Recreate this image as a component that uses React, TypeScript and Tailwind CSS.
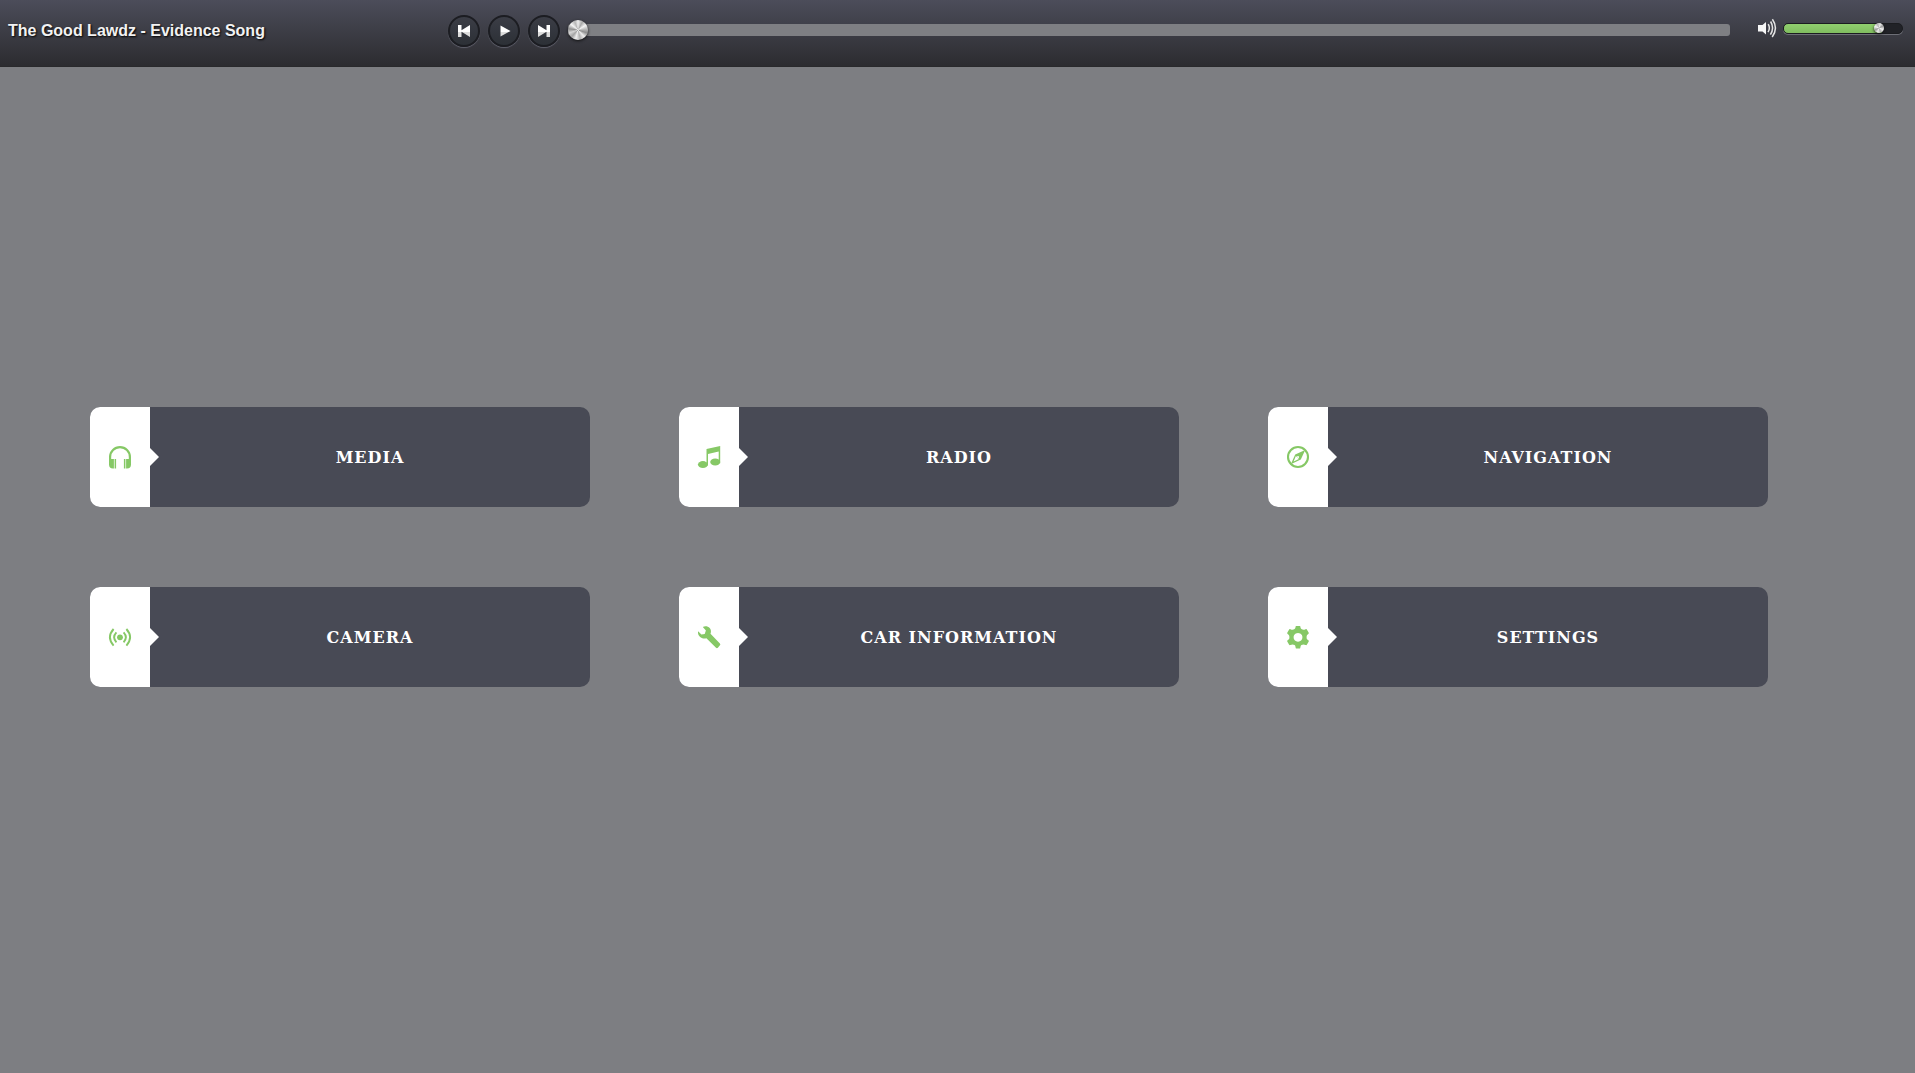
import { useState } from "react";
import type { ReactNode } from "react";

const icons: Record<string, ReactNode> = {
  headphones: (
    <>
      <path d="M2.100 17v-5a9.900 9.900 0 0 1 19.800 0v5" fill="none" stroke="currentColor" strokeWidth="2.200" />
      <path d="M1 14h4.900v9.400H5A4 4 0 0 1 1 19.400zM6.600 14h1.500v9.400H6.600zM23 14h-4.900v9.400h.9a4 4 0 0 0 4-4zM17.400 14h-1.500v9.400h1.500z" />
    </>
  ),
  music: (
    <>
      <path d="M9.500 4.100 23.200 1v17.200h-1.500V6.600L11 9v11.500H9.500z" />
      <ellipse cx="5.900" cy="19.600" rx="5" ry="3.500" />
      <ellipse cx="18.200" cy="17" rx="5" ry="3.500" />
    </>
  ),
  compass: (
    <>
      <circle cx="12" cy="12" r="10" fill="none" stroke="currentColor" strokeWidth="2.100" />
      <path
        fillRule="evenodd"
        d="M19.200 5 14.800 14.400 4.800 19.200 9.200 9.600zM9.900 11.100 7.600 16.400 12.900 14.100zM12 10.900a1.100 1.100 0 1 0 .01 0z"
      />
    </>
  ),
  broadcast: (
    <>
      <circle cx="12" cy="12.300" r="2.900" />
      <path
        d="M8.400 7.300Q3.800 12.300 8.400 17.300M15.600 7.300Q20.200 12.300 15.600 17.300M5.600 4Q-1.800 12.300 5.600 20.600M18.400 4Q25.800 12.300 18.400 20.600"
        fill="none"
        stroke="currentColor"
        strokeWidth="1.900"
      />
    </>
  ),
  wrench: (
    <path d="M1.100 6.200 4.400 9.400 7.700 9 8.900 5.500 5.800 1.900C8 .6 11 1 12.700 3.100c1.400 1.700 1.600 3.800.8 5.700l9.400 9.700c.5.600.5 1.300 0 1.800l-2 2.500c-.6.600-1.400.6-1.900 0L9.400 13.200c-2.300.8-4.800.3-6.500-1.400C1.300 10.300.7 8.200 1.100 6.200z" />
  ),
  gear: (
    <path
      fillRule="evenodd"
      d="M10 1h4c.5 0 .3 2.300 1.400 3.100 1.500.9 2.500.9 4.200.1.800-.3 1-.2 1.400.5l1.600 2.800c.4.700.3.900-.3 1.400-1.500 1.200-1.700 1.900-1.700 3.300s.2 2 1.700 3.100c.6.500.7.700.3 1.400L21 19.500c-.4.700-.6.800-1.400.5-1.700-.8-2.700-.8-4.200.1C14.300 20.900 14.500 23.500 14 23.500h-4c-.5 0-.3-2.600-1.400-3.400-1.500-.9-2.500-.9-4.200-.1-.8.300-1 .2-1.400-.5l-1.600-2.800c-.4-.7-.3-.9.300-1.400 1.500-1.100 1.700-1.700 1.700-3.100s-.2-2.100-1.700-3.300c-.6-.5-.7-.7-.3-1.400L3 4.700c.4-.7.600-.8 1.400-.5 1.700.8 2.700.8 4.200-.1C9.700 3.300 9.500 1 10 1zM12 7.900a4.400 4.400 0 1 0 .01 0z"
    />
  ),
};

const tiles = [
  { label: "MEDIA", icon: "headphones" },
  { label: "RADIO", icon: "music" },
  { label: "NAVIGATION", icon: "compass" },
  { label: "CAMERA", icon: "broadcast" },
  { label: "CAR INFORMATION", icon: "wrench" },
  { label: "SETTINGS", icon: "gear" },
];

function Tile({ label, icon }: { label: string; icon: string }) {
  return (
    <button type="button" className="flex h-[100px] w-full overflow-hidden rounded-[10px] bg-[#484a55] text-white">
      <span className="relative flex h-full w-[60px] shrink-0 items-center justify-center bg-white text-[#86c866]">
        <svg viewBox="0 0 24 24" className="size-6" fill="currentColor" aria-hidden="true">
          {icons[icon]}
        </svg>
        <span className="absolute top-1/2 left-full h-[18px] w-[9px] -translate-y-1/2 bg-white [clip-path:polygon(0_0,100%_50%,0_100%)]" />
      </span>
      <span className="flex h-full flex-1 items-center justify-center pt-0.5 font-['DejaVu_Serif',serif] text-base font-bold tracking-[1px]">
        {label}
      </span>
    </button>
  );
}

function ControlButton({ label, onClick, children }: { label: string; onClick?: () => void; children: ReactNode }) {
  return (
    <button
      type="button"
      aria-label={label}
      onClick={onClick}
      className="flex size-8 items-center justify-center rounded-full border-2 border-[#1c1d22] bg-linear-to-b from-[#3b3d46] to-[#2c3036] shadow-[0_1px_1px_#62636f]"
    >
      <svg viewBox="0 0 16 16" className="size-4" aria-hidden="true">
        <defs>
          <linearGradient id={label} x1="0" y1="0" x2="0" y2="16" gradientUnits="userSpaceOnUse">
            <stop offset="0.54" stopColor="#ffffff" />
            <stop offset="0.56" stopColor="#dcdcdc" />
          </linearGradient>
        </defs>
        <g fill={`url(#${label})`}>{children}</g>
      </svg>
    </button>
  );
}

export default function App() {
  const [position, setPosition] = useState(0);
  const [volume, setVolume] = useState(83);
  const [playing, setPlaying] = useState(false);

  return (
    <div className="min-h-screen bg-[#7d7e82]">
      <header className="flex h-[67px] items-center border-b border-[#29292c] bg-linear-to-b from-[#4c4d5a] to-[#2c2c30] pr-3 pb-1 pl-2">
        <h1 className="w-[440px] shrink-0 font-['Liberation_Sans',sans-serif] text-base font-bold text-[#f2f2f2] [text-shadow:1px_1px_2px_#000]">
          The Good Lawdz - Evidence Song
        </h1>
        <div className="flex shrink-0 gap-2">
          <ControlButton label="Previous">
            <path d="M2 2h3.500v5.200L14 2v12L5.500 8.800V14H2z" />
          </ControlButton>
          <ControlButton label="Play" onClick={() => setPlaying(!playing)}>
            {playing ? <path d="M3 2h4v12H3zM9 2h4v12H9z" /> : <path d="M4.500 2.500 14.500 8l-10 5.500z" />}
          </ControlButton>
          <ControlButton label="Next">
            <path d="M2 2l8.500 5.200V2H14v12h-3.500V8.800L2 14z" />
          </ControlButton>
        </div>
        <input
          type="range"
          aria-label="Track position"
          value={position}
          onChange={(e) => setPosition(Number(e.target.value))}
          className="mb-0.5 ml-2 h-3 min-w-0 flex-1 appearance-none rounded-[3px] bg-[#7e7f83] [&::-webkit-slider-thumb]:size-5 [&::-webkit-slider-thumb]:appearance-none [&::-webkit-slider-thumb]:rounded-full [&::-webkit-slider-thumb]:bg-[conic-gradient(#ededed,#a9a9a9_8%,#f4f4f4_16%,#b5b5b5_24%,#8f8f8f_30%,#eeeeee_38%,#b0b0b0_46%,#efefef_54%,#a3a3a3_62%,#d5d5d5_70%,#8f8f8f_77%,#f4f4f4_86%,#b5b5b5_94%,#ededed)] [&::-webkit-slider-thumb]:shadow-[0_1px_3px_#111]"
        />
        <div className="mb-1.5 ml-[27px] flex shrink-0 items-center gap-[6px]">
          <svg viewBox="0 0 20 20" className="size-5" aria-hidden="true">
            <path d="M1 7h4.500L9 4v12.500l-3.500-3H1z" fill="#f7f7f7" />
            <path
              d="M11.200 6.200q2.400 4-.2 8M13.600 3.500q4 6.500-.2 13.200M15.400 1.200q6.200 8.800-.2 17.800"
              fill="none"
              stroke="#e4e4e4"
              strokeWidth="1.500"
            />
          </svg>
          <input
            type="range"
            aria-label="Volume"
            value={volume}
            onChange={(e) => setVolume(Number(e.target.value))}
            style={{ backgroundSize: `${volume}% 100%` }}
            className="h-[11px] w-[120px] appearance-none rounded-[5px] border border-[#1b1c20] bg-[#212227] bg-linear-to-b from-[#90cf6e] to-[#80bd60] bg-no-repeat shadow-[0_1px_0_#6d6e76] [&::-webkit-slider-thumb]:size-[10px] [&::-webkit-slider-thumb]:appearance-none [&::-webkit-slider-thumb]:rounded-full [&::-webkit-slider-thumb]:bg-[conic-gradient(from_20deg,#e8e8e8,#9a9a9a_12%,#f4f4f4_25%,#b0b0b0_38%,#eeeeee_50%,#999999_62%,#f4f4f4_75%,#b5b5b5_88%,#e8e8e8)] [&::-webkit-slider-thumb]:shadow-[0_1px_3px_#111]"
          />
        </div>
      </header>
      <main className="grid grid-cols-3 gap-x-[89px] gap-y-20 pt-[340px] pr-[147px] pl-[90px]">
        {tiles.map((tile) => (
          <Tile key={tile.label} {...tile} />
        ))}
      </main>
    </div>
  );
}
